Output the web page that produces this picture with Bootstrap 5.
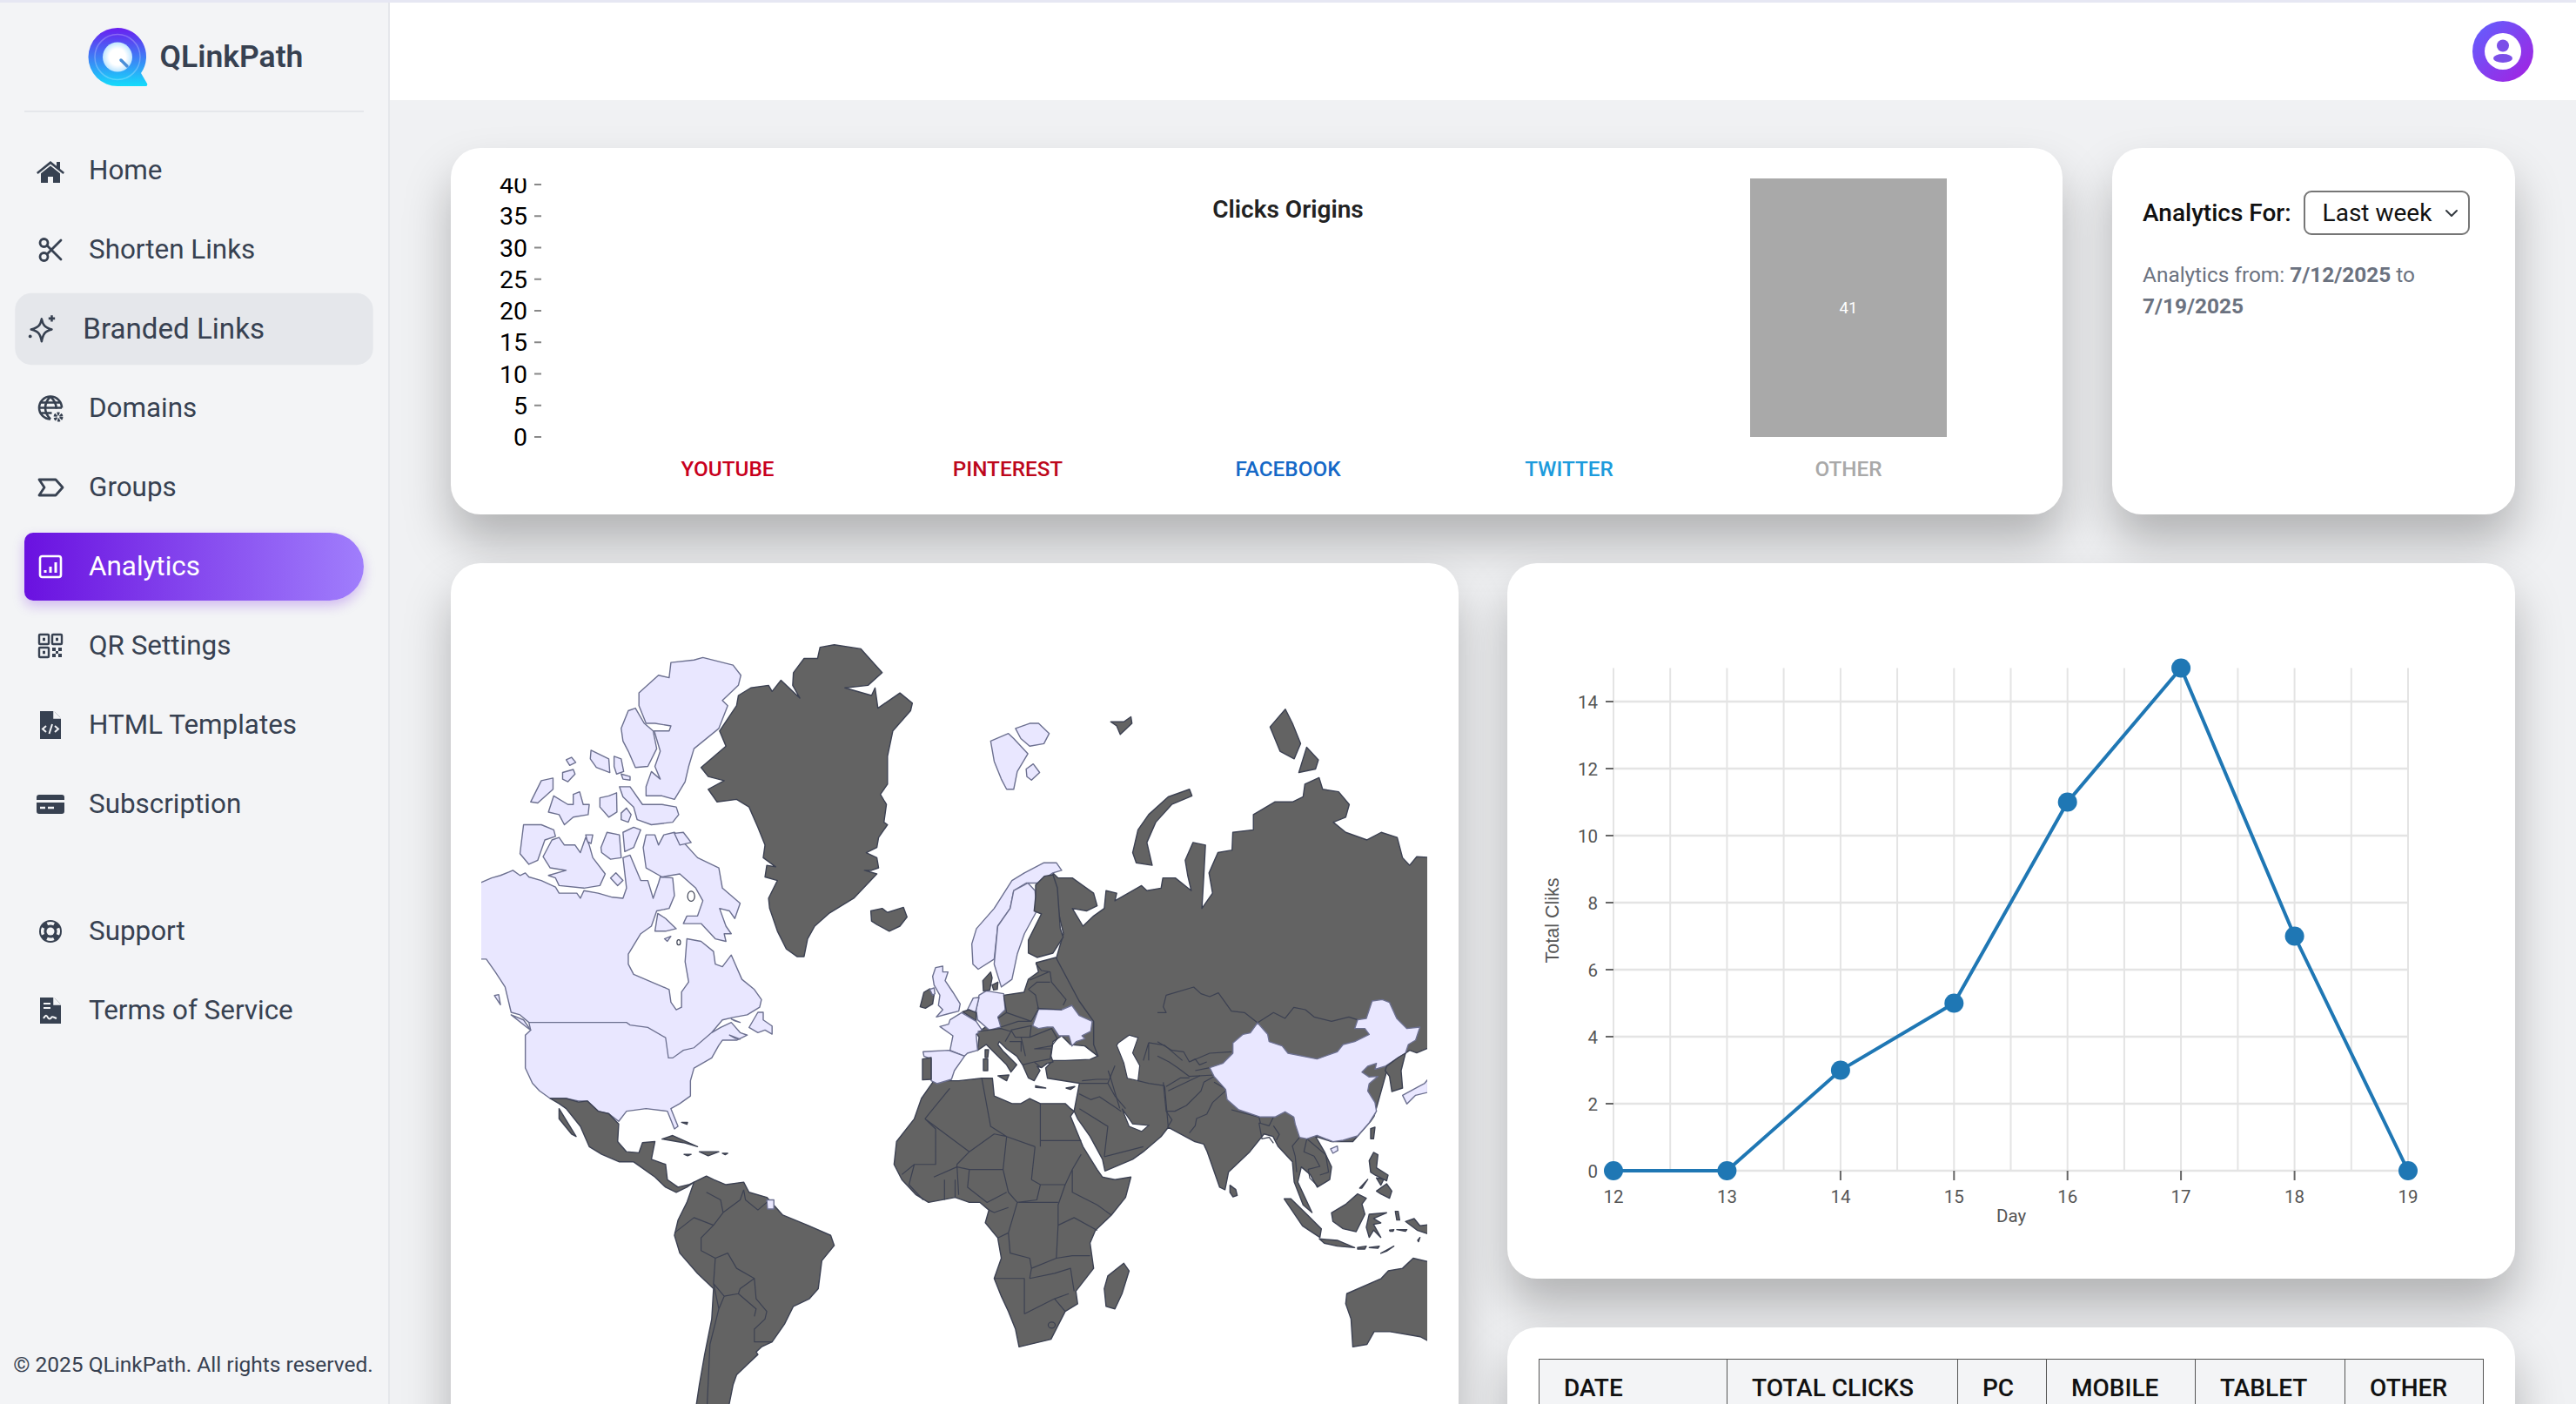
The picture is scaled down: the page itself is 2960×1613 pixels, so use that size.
<!DOCTYPE html>
<html lang="en">
<head>
<meta charset="utf-8">
<title>QLinkPath Analytics</title>
<link rel="stylesheet" href="https://cdn.jsdelivr.net/npm/bootstrap@5.3.0/dist/css/bootstrap.min.css">
<style>
html,body{height:100%;overflow:hidden}
body{font-family:Roboto,"Liberation Sans",sans-serif;background:#f0f1f3;color:#212529;border-top:3px solid #e6e7f3}
.app-shell{height:calc(100vh - 3px)}
.side-panel{width:448px;flex:none;background:#f3f4f6;border-right:2px solid #e5e7eb;color:#374151;position:relative}
.brand-row{height:126px;margin:0 28px;border-bottom:2px solid #e5e7eb;gap:14px;padding-left:2px;padding-top:2px}
.brand-row span{font-size:35.500px;font-weight:600;color:#374151}
.side-nav{padding:28px 28px 0;gap:13px}
.side-link{height:78px;color:#374151;font-size:31.400px;padding:0 0 0 14px;gap:28px;border-radius:10px;display:flex;align-items:center}
.side-link svg{width:32px;height:32px;flex:none}
.side-link.lift{background:#e5e7eb;transform:scale(1.055);border-radius:18px}
.side-link.current{color:#fff;background:linear-gradient(90deg,#6a11e0,#a07efc);border-radius:10px 39px 39px 10px;box-shadow:0 6px 14px rgba(106,17,224,.25)}
.side-gap{margin-top:55px}
.side-foot{font-size:24.500px;color:#374151;white-space:nowrap;text-align:center;padding-bottom:26px;margin-right:2px}
.top-strip{height:112px;background:#fff;flex:none;padding-right:49px}
.user-disc{width:70px;height:70px}
.work-area{padding:55px 70px 0;gap:56px;overflow:hidden;min-height:0}
.sheet{background:#fff;border:0;border-radius:34px;box-shadow:0 32px 54px rgba(0,0,0,.26)}
.row-top{display:grid;grid-template-columns:1852px 463px;gap:57px;height:421px;flex:none}
.row-low{display:grid;grid-template-columns:1158px 1158px;gap:56px;flex:none}
.stack-right{gap:56px}
.filter-box{padding:49px 35px}
.filter-box label{font-size:28px;font-weight:500;color:#111;white-space:nowrap}
.range-pick{width:191px;height:51px;font-size:28px;line-height:1.2;padding:0 20px;border:2px solid #767676;border-radius:9px;color:#111;background-size:22px 16px;background-position:right 8px center;flex:none}
.range-note{font-size:24.400px;line-height:35.500px;color:#6b7280;margin:28px 0 0}
.range-note b{font-weight:700}
.map-sheet{height:1100px}
.line-sheet{height:822px;flex:none}
.grid-sheet{padding:36px;height:400px}
.clicks-table{font-size:28px;width:1085px;border-color:#555;table-layout:fixed}
.clicks-table th{background:#f3f4f6;font-weight:500;padding:12px 0 8px 28px;white-space:nowrap;color:#111}
svg text{font-family:Roboto,"Liberation Sans",sans-serif}
.ld{fill:#636363;stroke:#3c4152;stroke-width:1.4;vector-effect:non-scaling-stroke;stroke-linejoin:round}
.ll{fill:#e9e7ff;stroke:#6c7090;stroke-width:1.4;vector-effect:non-scaling-stroke;stroke-linejoin:round}
.lw{fill:#fff;stroke:#3c4152;stroke-width:1.2;vector-effect:non-scaling-stroke}
.lb{fill:none;stroke:#3c4152;stroke-width:1.2;vector-effect:non-scaling-stroke;stroke-linejoin:round}
.lbl{fill:none;stroke:#6c7090;stroke-width:1.3;vector-effect:non-scaling-stroke}
.tk{stroke:#666;stroke-width:2}
.axt{font-size:20.500px;fill:#555}
</style>
</head>
<body>
<div class="app-shell d-flex">
  <aside class="side-panel d-flex flex-column">
    <div class="brand-row d-flex align-items-center justify-content-center">
      <svg width="70" height="70" viewBox="0 0 70 70" aria-hidden="true">
        <defs>
          <linearGradient id="lg" x1="0" y1="0" x2="0" y2="1"><stop offset="0" stop-color="#6a1ef0"/><stop offset=".5" stop-color="#3f7cf5"/><stop offset="1" stop-color="#14dcfb"/></linearGradient>
          <radialGradient id="lh"><stop offset=".55" stop-color="#fff"/><stop offset="1" stop-color="#bfe6ff"/></radialGradient>
        </defs>
        <path d="M35 1a33 33 0 0 1 27 52l7 12a2 2 0 0 1-2 3H35a33.500 33.500 0 0 1 0-67z" fill="url(#lg)"/>
        <circle cx="35" cy="34.500" r="26" fill="none" stroke="#fff" stroke-opacity=".25" stroke-width="1.500"/>
        <circle cx="35" cy="34.500" r="17" fill="url(#lh)"/>
        <path d="M39 38l7 7" stroke="#4a8fd8" stroke-width="3.500" stroke-linecap="round"/>
      </svg>
      <span>QLinkPath</span>
    </div>
    <nav class="nav flex-column side-nav">
      <a class="side-link nav-link" href="#"><svg viewBox="0 0 32 32" fill="#374151"><path d="M16 5 0 18l1.500 2L16 8.500 30.500 20l1.500-2-5-4V6h-4v4.800z"/><path d="M16 10.500 5 19.300V30h8v-7h6v7h8V19.300z"/></svg><span>Home</span></a>
      <a class="side-link nav-link" href="#"><svg viewBox="0 0 32 32" fill="none" stroke="#374151" stroke-width="2.800"><circle cx="8.500" cy="8" r="4.500"/><circle cx="8.500" cy="24" r="4.500"/><path d="M12 11 28 27M12 21 28 5" stroke-linecap="round"/></svg><span>Shorten Links</span></a>
      <a class="side-link nav-link lift" href="#"><svg viewBox="0 0 32 32" fill="none" stroke="#374151" stroke-width="2.400" stroke-linejoin="round"><path d="M15 5c1.500 7 3.500 9.500 11 11.500-7.500 2-9.500 4.500-11 13-1.500-8.500-3.500-11-11.500-13C11.500 14.500 13.500 12 15 5z"/><path d="M26 1v7M22.500 4.500h7" stroke-width="2.400"/><circle cx="2.500" cy="24" r="1.800" fill="#374151" stroke="none"/></svg><span>Branded Links</span></a>
      <a class="side-link nav-link" href="#"><svg viewBox="0 0 32 32" fill="none" stroke="#374151" stroke-width="2.600"><path d="M16 28.500a13 13 0 1 1 13-13M3 15.500h26M4.500 9.500h23M4.500 21.500h13"/><path d="M16 2.500c-8 8-8 18 0 26M16 2.500c5 5 7 10 6.500 14"/><circle cx="25" cy="26" r="3.500" stroke-width="4" stroke-dasharray="2.500 1.200"/></svg><span>Domains</span></a>
      <a class="side-link nav-link" href="#"><svg viewBox="0 0 32 32" fill="none" stroke="#374151" stroke-width="2.800" stroke-linejoin="round"><path d="M3 7h19l8 9-8 9H3l6-9z"/></svg><span>Groups</span></a>
      <a class="side-link nav-link current" href="#"><svg viewBox="0 0 32 32" fill="none" stroke="#fff" stroke-width="2.600"><rect x="4" y="4" width="24" height="24" rx="2.500"/><path d="M10 23v-3M16 23v-7M22 23V11" stroke-width="3"/></svg><span>Analytics</span></a>
      <a class="side-link nav-link" href="#"><svg viewBox="0 0 32 32" fill="none" stroke="#374151" stroke-width="2.400"><rect x="3" y="3" width="11" height="11" rx="1"/><rect x="18" y="3" width="11" height="11" rx="1"/><rect x="3" y="18" width="11" height="11" rx="1"/><path d="M7 8.500h3M22 8.500h3M7 23.500h3" stroke-width="3.500"/><path d="M18 18h4v4h-4zM25 18h4v4h-4zM22 22h3v3h-3zM18 25h4v4h-4zM25 25h4v4h-4z" fill="#374151" stroke="none"/></svg><span>QR Settings</span></a>
      <a class="side-link nav-link" href="#"><svg viewBox="0 0 32 32"><path d="M4 0h16l8 8v24H4z" fill="#374151"/><path d="M20 0v8h8" fill="#f3f4f6" stroke="#f3f4f6" stroke-width="1.500"/><path d="M11 17l-4 3.500 4 3.500M21 17l4 3.500-4 3.500M18 15l-3.500 11" fill="none" stroke="#f3f4f6" stroke-width="2"/></svg><span>HTML Templates</span></a>
      <a class="side-link nav-link" href="#"><svg viewBox="0 0 32 32"><rect x="0" y="5" width="32" height="22" rx="3" fill="#374151"/><rect x="0" y="11" width="32" height="3" fill="#f3f4f6"/><path d="M4 20h6M13 20h7" stroke="#f3f4f6" stroke-width="2.500"/></svg><span>Subscription</span></a>
      <a class="side-link nav-link side-gap" href="#"><svg viewBox="0 0 32 32"><circle cx="16" cy="16" r="13" fill="#374151"/><circle cx="16" cy="16" r="9.300" fill="none" stroke="#f3f4f6" stroke-width="3.500" stroke-dasharray="8 6.600" stroke-dashoffset="4"/><circle cx="16" cy="16" r="4.500" fill="#f3f4f6"/></svg><span>Support</span></a>
      <a class="side-link nav-link" href="#"><svg viewBox="0 0 32 32"><path d="M4 1h16l8 8v22H4z" fill="#374151"/><path d="M20 1v8h8" fill="#f3f4f6" stroke="#f3f4f6" stroke-width="1.500"/><path d="M8 8h8M8 13h8" stroke="#f3f4f6" stroke-width="2"/><path d="M8 25c3-5 4-3 5-1s3 2 4 0 3 0 6 1" fill="none" stroke="#f3f4f6" stroke-width="2"/></svg><span>Terms of Service</span></a>
    </nav>
    <div class="side-foot mt-auto">© 2025 QLinkPath. All rights reserved.</div>
  </aside>

  <div class="flex-grow-1 d-flex flex-column" style="min-width:0">
    <header class="top-strip d-flex align-items-center justify-content-end">
      <svg class="user-disc" viewBox="0 0 70 70" aria-hidden="true">
        <defs><linearGradient id="ug" x1="0" y1="0" x2="1" y2="1"><stop offset="0" stop-color="#5f62ff"/><stop offset="1" stop-color="#a61fe0"/></linearGradient></defs>
        <circle cx="35" cy="35" r="35" fill="url(#ug)"/><circle cx="35" cy="35" r="21" fill="#fff"/>
        <circle cx="35" cy="28.500" r="7" fill="#7b4fe8"/><ellipse cx="35" cy="43" rx="11" ry="5" fill="#7b4fe8"/>
      </svg>
    </header>

    <main class="work-area d-flex flex-column flex-grow-1">
      <section class="row-top">
        <div class="card sheet overflow-hidden">
          <svg width="1852" height="421" viewBox="518 170 1852 421" role="img" aria-label="Clicks Origins bar chart">
            <defs><clipPath id="tc"><rect x="518" y="205" width="1852" height="386"/></clipPath></defs>
            <g clip-path="url(#tc)" font-size="28.500" fill="#000" text-anchor="end">
              <text x="606" y="222">40</text><text x="606" y="258">35</text><text x="606" y="295">30</text><text x="606" y="331">25</text><text x="606" y="367">20</text><text x="606" y="403">15</text><text x="606" y="440">10</text><text x="606" y="476">5</text><text x="606" y="512">0</text>
            </g>
            <path d="M614 212h8M614 248.300h8M614 284.500h8M614 320.800h8M614 357h8M614 393.300h8M614 429.500h8M614 465.800h8M614 502h8" stroke="#888" stroke-width="2"/>
            <text x="1480" y="250" text-anchor="middle" font-size="28" font-weight="600" fill="#222">Clicks Origins</text>
            <rect x="2011" y="205" width="226" height="297" fill="#a9a9a9"/>
            <text x="2124" y="360" text-anchor="middle" font-size="18.500" fill="#fff">41</text>
            <g font-size="24.300" font-weight="500" text-anchor="middle">
              <text x="836" y="547" fill="#c8001e">YOUTUBE</text><text x="1158" y="547" fill="#bd081c">PINTEREST</text><text x="1480" y="547" fill="#1569c7">FACEBOOK</text><text x="1803" y="547" fill="#1d9bdc">TWITTER</text><text x="2124" y="547" fill="#a9a9a9">OTHER</text>
            </g>
          </svg>
        </div>
        <div class="card sheet filter-box">
          <div class="d-flex align-items-center" style="gap:14px">
            <label for="rng">Analytics For:</label>
            <select id="rng" class="form-select range-pick"><option>Last week</option><option>Last month</option></select>
          </div>
          <p class="range-note">Analytics from: <b>7/12/2025</b> to <b>7/19/2025</b></p>
        </div>
      </section>

      <section class="row-low">
        <div class="card sheet map-sheet overflow-hidden">
          <svg width="1158" height="1100" viewBox="518 647 1158 1100" role="img" aria-label="World map">
            <defs><clipPath id="mc"><rect x="553" y="650" width="1087" height="1100"/></clipPath></defs>
            <g clip-path="url(#mc)">
              <!-- Americas -->
              <g transform="translate(520 700) scale(.408 .5824)">
                <path class="ll" d="M60 545L110 530 135 525 160 518 170 515 190 525 205 520 215 528 250 535 290 548 300 560 350 560 360 570 370 555 410 560 450 568 480 570 490 550 480 490 500 485 515 510 530 535 550 535 565 570 580 540 585 528 620 530 625 565 610 590 575 595 560 625 530 640 495 680 495 700 510 720 560 735 610 750 615 775 630 790 645 785 645 755 665 735 655 695 660 650 700 655 735 675 740 700 760 705 785 682 815 730 850 750 870 770 865 785 830 800 790 805 760 810 730 835 755 825 785 815 810 835 830 840 800 850 760 850 750 860 730 885 680 905 670 930 670 960 640 975 615 985 635 1020 625 1025 605 990 545 985 490 990 468 1010 440 995 410 990 380 970 355 970 320 965 275 965 245 950 225 935 205 905 205 840 220 830 215 815 190 800 165 795 148 745 120 715 95 690 60 690Z"/>
                <path class="lbl" d="M215 815H490L500 820 550 825 600 845 608 885 620 885 650 870 680 865 730 835"/>
                <path class="ll" d="M525 165 580 130 610 135 615 105 680 100 705 95 790 110 812 130 805 150 760 180 775 190 750 235 680 275 665 310 655 340 625 375 590 368 545 368 545 350 560 320 585 335 570 310 585 280 568 240 610 240 615 230 570 225 545 225 525 190Z"/>
                <path class="ll" d="M495 200 515 195 540 225 565 240 575 275 550 310 515 312 495 280 480 260 475 235Z"/>
                <path class="ll" d="M390 278 440 295 443 322 405 312 388 295ZM455 290 475 295 482 320 462 325 455 310ZM475 325 500 330 500 337 480 335ZM320 297 335 292 347 302 330 308ZM310 322 340 316 345 325 325 340 310 335ZM220 380 250 338 283 333 283 355 240 382ZM270 400 285 368 325 385 340 385 340 365 358 360 368 385 385 385 382 405 340 410 315 425 300 405ZM415 372 440 368 462 362 463 400 440 410 415 390ZM475 402 490 392 503 405 495 420 475 415Z"/>
                <path class="ll" d="M470 350 500 350 535 385 590 385 630 390 637 405 620 420 560 425 520 415 510 390 480 370ZM200 425 250 425 285 435 290 448 260 455 240 495 215 503 190 482ZM255 488 280 455 300 450 315 465 345 465 360 480 375 450 385 465 395 490 430 522 415 545 370 550 300 545 290 530 270 525 320 515 275 510ZM375 445 395 445 390 462 380 458ZM418 470 435 440 470 445 475 490 445 493 420 480ZM480 440 510 430 530 435 510 470 485 478ZM445 530 460 520 480 535 465 545Z"/>
                <path class="ll" d="M537 470 545 445 570 445 580 465 595 445 625 440 690 490 750 510 760 550 810 580 795 610 780 595 752 590 770 625 785 640 765 640 770 655 740 650 700 620 650 620 660 605 690 605 705 575 685 550 640 522 590 528 545 510Z"/>
                <ellipse class="lw" cx="672" cy="566" rx="10" ry="10"/>
                <path class="ll" d="M625 442 650 440 672 460 640 465ZM578 600 600 610 630 630 600 635 570 635ZM597 650 615 645 605 655ZM835 825 860 795 875 795 875 810 900 822 900 838 880 830 860 835ZM165 800 200 810 220 830 210 825ZM118 762 130 760 135 780ZM785 808 810 815 795 812ZM780 840 810 848 795 846Z"/>
                <ellipse class="lw" cx="637" cy="657" rx="5" ry="5"/>
                <path class="ld" d="M1035 75 1075 70 1150 78 1210 125 1170 150 1105 155 1180 170 1190 155 1198 195 1260 165 1295 185 1290 200 1240 240 1225 290 1225 345 1205 365 1222 385 1215 420 1225 425 1200 450 1195 470 1165 480 1195 490 1200 510 1180 515 1160 515 1195 522 1130 570 1060 600 1020 625 1000 650 990 685 970 685 940 670 915 635 893 590 890 570 915 535 880 528 885 505 910 508 875 490 880 465 860 430 835 390 800 375 745 380 720 355 765 338 720 330 700 312 770 270 752 240 800 190 805 170 840 155 890 150 900 162 925 140 978 175 958 150 960 125 990 97 1028 97Z"/>
                <path class="ld" d="M1178 595 1210 590 1225 598 1270 588 1280 607 1260 625 1230 635 1195 622 1180 615Z"/>
                <path class="ld" d="M275 965 320 965 355 972 380 970 410 990 440 995 468 1015 465 1050 490 1070 525 1072 535 1052 570 1050 560 1085 600 1095 605 1125 635 1140 665 1135 680 1130 660 1140 630 1150 600 1140 570 1120 530 1100 510 1090 470 1090 420 1075 385 1060 360 1020 320 985 300 975Z"/>
                <path class="ld" d="M300 985 348 1040 335 1035 300 1005ZM590 1045 620 1038 690 1060 650 1052ZM695 1070 750 1070 720 1078ZM652 1075 672 1075 662 1078ZM760 1073 775 1073 768 1076ZM645 1012 662 1012 660 1016Z"/>
                <path class="ld" d="M680 1130 715 1118 735 1125 770 1135 820 1130 835 1150 885 1160 930 1195 1000 1215 1065 1235 1075 1255 1040 1285 1030 1340 1005 1360 960 1375 935 1410 900 1445 870 1455 855 1465 860 1470 830 1490 800 1510 790 1530 770 1600 680 1600 695 1530 710 1470 730 1400 735 1340 690 1310 640 1270 625 1235 635 1205 660 1170Z"/>
                <path class="ll" d="M885 1165 905 1165 905 1183 887 1183Z"/>
                <path class="lb" d="M715 1150 755 1165 762 1190 810 1165 820 1145M762 1190 735 1215 700 1240 700 1265 740 1280 775 1270 800 1300 850 1320 855 1360 885 1385 880 1400 850 1420 850 1445 900 1445M740 1280 735 1330 765 1355 805 1350 810 1340 850 1320M735 1330 750 1380 725 1450 715 1600M765 1355 750 1380M805 1350 855 1380 850 1395M625 1230 680 1200 735 1215M820 1145 825 1165 860 1185 885 1170"/>
              </g>
              <!-- Asia, Africa, Australia -->
              <g transform="translate(1020 700) scale(.408 .5824)">
                <path class="ld" d="M465 520 480 530 520 530 580 560 590 585 560 595 520 590 550 625 580 605 610 590 615 555 645 560 640 575 715 545 730 555 770 550 775 530 810 530 855 555 845 525 838 495 860 460 895 465 890 530 885 590 915 560 905 520 930 480 970 475 972 440 1030 435 1030 405 1090 380 1140 380 1170 370 1175 345 1215 332 1225 355 1270 360 1300 385 1290 410 1255 420 1290 440 1350 455 1390 440 1435 450 1450 490 1470 505 1490 488 1540 490 1540 860 1490 875 1470 870 1450 880 1435 900 1410 900 1370 1000 1360 1010 1310 1050 1250 1050 1205 1040 1230 1070 1250 1100 1245 1125 1210 1140 1190 1115 1165 1100 1155 1130 1195 1190 1170 1175 1145 1130 1140 1090 1100 1060 1085 1040 1060 1035 1020 1070 960 1110 950 1145 935 1140 900 1070 890 1055 865 1050 790 1022 770 1040 720 1070 690 1085 612 1108 605 1085 570 1040 535 1005 525 990 540 935 450 925 445 905 465 890 500 890 570 888 592 881 555 861 520 850 490 841 470 800 470 700 495 640 475 580Z"/>
                <path class="lw" d="M650 855 680 840 705 845 690 875 710 900 705 930 675 925 665 895 645 860Z"/>
                <path class="lw" d="M660 985 690 1015 735 1018 715 1030 680 1020Z"/>
                <path class="ld" d="M130 930 200 930 265 925 295 925 300 960 350 975 375 975 400 965 430 975 500 975 515 985 525 990 515 1000 550 1060 590 1105 605 1120 640 1125 685 1120 670 1160 630 1195 585 1225 570 1250 580 1300 530 1345 535 1370 500 1385 460 1440 370 1455 360 1420 340 1385 320 1355 300 1320 320 1280 310 1240 275 1210 285 1185 260 1170 230 1170 190 1160 115 1170 80 1155 40 1125 18 1095 25 1050 75 1005 95 965Z"/>
                <path class="lb" d="M105 1005 175 945M105 1005 135 1025 135 1095 75 1095M105 1005 230 1070 300 1035 335 1040 415 1060M265 925 290 1020 335 1040M430 975V1060M430 1048H545M415 1060 405 1125M335 1040 325 1105 340 1150M230 1070 195 1095M75 1095 40 1115M195 1095 200 1155M130 1120 195 1100 230 1105 325 1105M405 1125 430 1135 500 1135 520 1105 545 1075M520 1105 520 1150 590 1175 630 1195M430 1135 420 1165 365 1170 340 1150M480 1170H370M500 1135 480 1175 480 1215 525 1200 590 1225M365 1170 340 1230 310 1240M480 1215 475 1280 520 1275 570 1275M340 1230 345 1270 400 1280 405 1300 475 1280M300 1320H385V1390M405 1300 400 1320 470 1310 515 1300 525 1345M385 1390 470 1360 510 1350M470 1360 500 1385M230 1105 225 1140 280 1170 335 1150M285 1185 300 1190 340 1180M75 1095 60 1135 100 1165M160 1125V1165M190 1125V1160"/>
                <ellipse class="lb" cx="462" cy="1412" rx="10" ry="6"/>
                <path class="ld" d="M665 1290 680 1305 660 1350 640 1380 615 1375 610 1340 620 1315Z"/>
                <path class="ll" d="M237 660 250 630 300 590 350 535 385 520 440 500 475 500 490 515 465 520 425 540 390 540 355 555 345 590 310 625 300 690 255 710 240 700Z"/>
                <path class="ll" d="M395 540 415 555 420 595 385 640 365 680 350 730 320 745 300 700 310 625 345 590 355 555Z"/>
                <path class="ll" d="M290 260 340 245 355 255 395 285 365 320 355 355 335 355 320 335 300 300ZM360 235 400 225 425 225 455 245 440 265 400 270 375 255ZM390 315 410 305 428 322 405 337 392 330Z"/>
                <path class="ld" d="M628 222 665 222 685 212 688 225 655 247 645 230ZM690 480 705 435 735 405 790 370 850 355 857 368 800 385 755 420 730 460 745 505 700 500ZM1077 232 1120 197 1140 225 1163 265 1145 295 1105 280ZM1158 322 1180 272 1213 297 1205 315Z"/>
                <path class="ld" d="M1293 1350 1390 1320 1410 1305 1450 1300 1480 1280 1540 1290 1540 1450 1500 1435 1415 1425 1370 1425 1350 1450 1310 1455 1305 1400 1290 1370Z"/>
                <path class="lb" d="M540 985 620 1020 610 1080M610 1080 720 1060M620 935 640 960 670 985M780 940 790 1020M790 950 880 920M735 855V890M735 855 780 860 830 890M720 890 735 855M640 900 620 935M705 930 735 935 780 940M540 935H620"/>
              </g>
              <!-- Europe -->
              <g transform="translate(1040 1000) scale(.3333)">
                <path class="ld" d="M450 50 480 20 510 15 525 60 530 130 535 200 545 230 510 285 455 300 425 285 425 240 450 190 470 150 445 140 450 90Z"/>
                <path class="ld" d="M340 430 410 420 425 375 460 350 452 318 520 300 600 450 650 520 650 600 665 640 620 605 570 600 540 570 510 590 503 640 510 660 490 665 470 680 455 675 465 690 445 725 425 715 405 670 385 640 350 615 325 590 320 600 340 625 385 670 365 695 350 670 310 630 280 600 250 620 255 575 245 560 270 545 320 510Z"/>
                <path class="ll" d="M440 535 460 478 540 480 575 465 600 500 645 520 640 555 610 570 620 580 590 590 575 605 565 570 530 570 510 540 490 540 460 545Z"/>
                <path class="ll" d="M245 480 255 430 280 415 340 425 345 480 320 505 330 540 290 550 250 515Z"/>
                <path class="ll" d="M215 480 235 440 255 438 245 480 240 490Z"/>
                <path class="ld" d="M198 487 220 480 245 490 245 518ZM268 380 295 350 300 370 292 412 270 415ZM300 395 320 385 318 410 305 412Z"/>
                <path class="ll" d="M120 538 150 530 155 515 195 490 245 520 265 550 245 565 250 620 215 630 205 640 155 620 165 570Z"/>
                <path class="ll" d="M62 625 150 620 205 640 170 690 160 720 110 735 90 725 90 650 65 640Z"/>
                <path class="ld" d="M60 650 90 645 90 720 60 722Z"/>
                <path class="ll" d="M105 335 130 330 130 350 148 350 138 380 165 420 190 460 185 485 145 495 108 505 130 480 115 465 120 430 100 395 95 365Z"/>
                <path class="ld" d="M65 420 85 408 100 428 95 460 70 475 52 470Z"/>
                <path class="ll" d="M85 410 100 405 103 425 95 430Z"/>
                <path class="ld" d="M270 650 285 650 285 690 270 690ZM276 618 288 618 285 645 276 645ZM320 708 358 705 350 725ZM450 742 485 750 450 748ZM555 750 585 745 570 755Z"/>
                <path class="lb" d="M430 378 495 350M425 410 455 385 500 385M450 320 470 345 500 350 505 385 555 445 545 465M340 430 350 490 435 520 460 478 450 430 425 410M455 475 540 480M320 510 350 490M330 540 390 520 435 520M365 550 435 535 430 575 380 575 365 550M250 555 290 550 330 545 365 555 345 590M430 575 505 545 525 580 505 605 445 615M445 615 505 615 500 650 445 660M400 575 415 640M360 590 400 590 400 625M405 670 445 660 470 680M700 690 710 720 740 820M610 725 660 720 700 720M600 770 640 790 670 780 745 830"/>
              </g>
              <!-- East Asia -->
              <g transform="translate(1330 1120) scale(.3333)">
                <path class="lb" d="M0 130 30 130 20 110 30 70 125 42 150 65 180 75 210 62 255 125 300 130 345 165M345 165 400 130 440 150 470 112 510 120 540 145 600 160 660 145 690 155M0 230 50 260 90 265 110 300 180 270 255 265M0 280 40 300 70 320 110 350 195 345M110 300 130 290 145 310 170 300M130 330 180 320M20 370 30 470 60 470 100 450 150 400 160 370 195 350M30 385 80 355 110 355M195 370 240 395 190 440 170 480 135 495 130 520 110 545M30 470 50 500 35 525M255 465 350 490 355 510M350 510 385 520 400 490 440 472M350 510 360 565 385 560 400 580M400 520 420 550 410 570M490 560 465 590 475 625 480 680M515 565 505 610 540 625 560 660 520 670 525 700 555 730M515 565 580 620 590 680 560 690"/>
                <path class="ll" d="M180 320 225 305 260 270 260 235 295 205 320 200 345 165 380 205 385 230 430 245 450 270 550 290 620 265 640 240 680 230 730 205 715 185 680 185 690 155 720 150 740 90 775 85 800 95 825 150 860 185 905 180 890 225 865 240 855 270 830 285 785 315 750 325 755 305 725 315 705 335 730 352 760 350 730 375 725 400 750 440 755 470 730 510 690 555 640 570 605 575 550 553 515 565 490 560 475 515 470 490 440 472 405 490 355 490 280 465 240 430 235 395 195 350Z"/>
                <path class="ld" d="M790 315 830 285 855 270 840 330 845 390 808 402 800 350 785 330Z"/>
                <path class="ll" d="M597 600 620 590 622 605 605 615ZM845 415 900 385 920 375 932 360 932 405 890 415 860 445Z"/>
                <path class="ld" d="M735 530 750 525 745 565 735 565ZM250 725 270 740 275 760 260 765 250 750ZM730 640 745 612 760 620 755 665 795 690 790 710 750 690 735 680ZM755 700 780 705 770 725ZM755 745 790 720 808 745 800 770 770 755ZM697 735 725 705 705 735ZM600 820 650 790 690 755 720 770 705 790 715 825 685 885 640 875 605 850ZM720 870 730 825 790 820 745 840 770 855 745 860 770 905 745 880 730 905ZM437 772 460 772 520 830 565 875 560 905 500 865ZM558 910 620 915 680 940 620 935 575 925ZM690 940 720 935 715 945 690 945ZM730 940 765 935 760 942ZM770 960 815 935 790 952ZM800 880 815 878 812 884 802 884ZM825 878 860 878 855 884ZM820 815 830 815 835 845 825 845ZM855 850 885 840 905 865 940 860 940 895 895 880ZM897 915 905 905 900 920Z"/>
              </g>
            </g>
          </svg>
        </div>

        <div class="stack-right d-flex flex-column">
          <div class="card sheet line-sheet">
            <svg width="1158" height="822" viewBox="1732 648.500 1158 822" role="img" aria-label="Total clicks by day">
              <path d="M1854 769V1346.500M1919.200 769V1346.500M1984.400 769V1346.500M2049.600 769V1346.500M2114.900 769V1346.500M2180.100 769V1346.500M2245.300 769V1346.500M2310.500 769V1346.500M2375.700 769V1346.500M2440.900 769V1346.500M2506.100 769V1346.500M2571.400 769V1346.500M2636.600 769V1346.500M2701.800 769V1346.500M2767 769V1346.500" stroke="#e4e4e4" stroke-width="2"/>
              <path d="M1854 1346.500H2767M1854 1269.500H2767M1854 1192.500H2767M1854 1115.500H2767M1854 1038.500H2767M1854 961.500H2767M1854 884.500H2767M1854 807.500H2767" stroke="#e4e4e4" stroke-width="2.500"/>
              <path d="M1845 1346.500h9M1845 1269.500h9M1845 1192.500h9M1845 1115.500h9M1845 1038.500h9M1845 961.500h9M1845 884.500h9M1845 807.500h9M1984.400 1346.500v11M2114.900 1346.500v11M2245.300 1346.500v11M2375.700 1346.500v11M2506.100 1346.500v11M2636.600 1346.500v11" class="tk" fill="none"/>
              <g class="axt" text-anchor="end">
                <text x="1836" y="1354">0</text><text x="1836" y="1277">2</text><text x="1836" y="1200">4</text><text x="1836" y="1123">6</text><text x="1836" y="1046">8</text><text x="1836" y="969">10</text><text x="1836" y="892">12</text><text x="1836" y="815">14</text>
              </g>
              <g class="axt" text-anchor="middle">
                <text x="1854" y="1383">12</text><text x="1984.400" y="1383">13</text><text x="2114.900" y="1383">14</text><text x="2245.300" y="1383">15</text><text x="2375.700" y="1383">16</text><text x="2506" y="1383">17</text><text x="2636.600" y="1383">18</text><text x="2767" y="1383">19</text>
                <text x="2311" y="1405">Day</text>
              </g>
              <text transform="translate(1791 1059) rotate(-90)" text-anchor="middle" font-size="21.500" fill="#555" style="font-family:'Liberation Sans',sans-serif">Total Cliks</text>
              <polyline points="1854,1346.500 1984.400,1346.500 2114.900,1231 2245.300,1154 2375.700,923 2506.100,769 2636.600,1077 2767,1346.500" fill="none" stroke="#1f77b4" stroke-width="4"/>
              <g fill="#1f77b4">
                <circle cx="1854" cy="1346.500" r="11"/><circle cx="1984.400" cy="1346.500" r="11"/><circle cx="2114.900" cy="1231" r="11"/><circle cx="2245.300" cy="1154" r="11"/><circle cx="2375.700" cy="923" r="11"/><circle cx="2506.100" cy="769" r="11"/><circle cx="2636.600" cy="1077" r="11"/><circle cx="2767" cy="1346.500" r="11"/>
              </g>
            </svg>
          </div>
          <div class="card sheet grid-sheet">
            <table class="table table-bordered clicks-table mb-0">
              <thead><tr><th style="width:216px">DATE</th><th style="width:265px">TOTAL CLICKS</th><th style="width:102px">PC</th><th style="width:171px">MOBILE</th><th style="width:172px">TABLET</th><th style="width:159px">OTHER</th></tr></thead>
            </table>
          </div>
        </div>
      </section>
    </main>
  </div>
</div>
<script src="https://cdn.jsdelivr.net/npm/bootstrap@5.3.0/dist/js/bootstrap.bundle.min.js"></script>
</body>
</html>
